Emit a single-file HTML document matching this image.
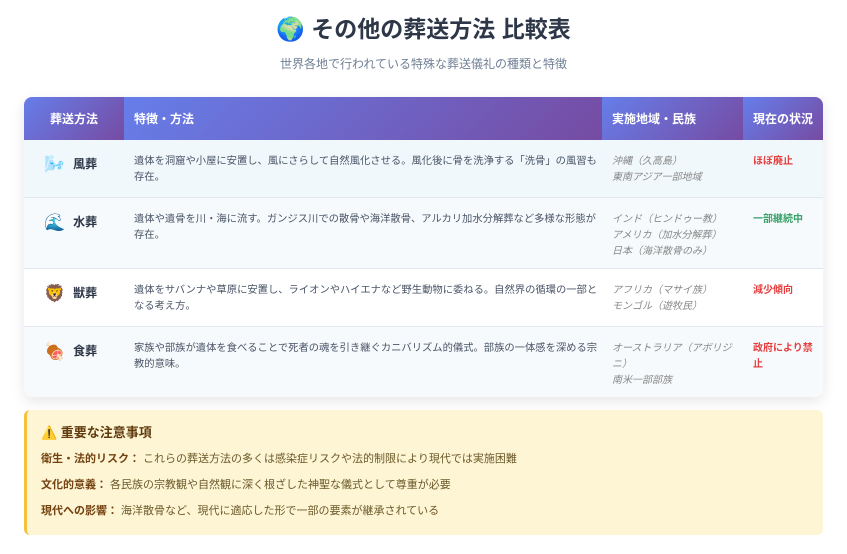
<!DOCTYPE html>
<html><head><meta charset="utf-8"><style>
*{box-sizing:border-box;margin:0;padding:0}
body{width:847px;height:554px;background:#fff;font-family:"Liberation Sans","Noto Sans CJK JP",sans-serif;color:#2d3748;overflow:hidden}
h1{position:absolute;top:10px;left:0;width:847px;text-align:center;font-size:23px;font-weight:bold;color:#2d3748}
.sub{position:absolute;top:55px;left:0;width:847px;text-align:center;font-size:12px;color:#718096}
.tbl{position:absolute;left:24px;top:97px;width:799px;border-radius:8px;overflow:hidden;box-shadow:0 4px 14px rgba(0,0,0,.1)}
table{border-collapse:collapse;width:100%;font-size:11px;table-layout:fixed}
th{height:43px;color:#fff;font-size:12px;text-align:left;padding-left:10px;background:linear-gradient(135deg,#667eea,#764ba2)}
th:first-child{text-align:center;padding:0}
td{border-bottom:1px solid #e2e8f0;vertical-align:top;padding-top:14px;line-height:16px}
td.m{font-weight:bold;font-size:12px;padding-left:20px;padding-top:16px}
td.m span{font-size:17px;margin-right:8px;vertical-align:-2px}
td.d{padding-left:10px;padding-right:0;color:#4a5568;font-size:10.3px}
td.r{padding-left:10px;padding-right:6px;color:#888;font-style:italic;font-size:10px}
td.s{padding-left:10px;padding-right:6px;font-weight:bold;font-size:10px}
.red{color:#e53e3e}.grn{color:#38a169}
.note{position:absolute;left:24px;top:410px;width:799px;height:125px;background:#fef5d4;border-left:3px solid #f6c23e;border-radius:6px;padding:12px 14px;color:#744210;font-size:11px}
.note h3{font-size:13px;margin-bottom:9px;color:#5f3b0e}
.note p{margin-bottom:10px;color:#6b5a2a}
.note b{color:#744210}
</style></head><body>
<h1>🌍 その他の葬送方法 比較表</h1>
<div class="sub">世界各地で行われている特殊な葬送儀礼の種類と特徴</div>
<div class="tbl"><table>
<colgroup><col style="width:100px"><col style="width:478px"><col style="width:141px"><col style="width:80px"></colgroup>
<tr><th>葬送方法</th><th>特徴・方法</th><th>実施地域・民族</th><th>現在の状況</th></tr>
<tr style="height:57px;background:#f0f8fb"><td class="m"><span>🌬️</span>風葬</td><td class="d">遺体を洞窟や小屋に安置し、風にさらして自然風化させる。風化後に骨を洗浄する「洗骨」の風習も存在。</td><td class="r">沖縄（久高島）<br>東南アジア一部地域</td><td class="s red">ほぼ廃止</td></tr>
<tr style="height:71px;background:#f7fafc"><td class="m"><span>🌊</span>水葬</td><td class="d">遺体や遺骨を川・海に流す。ガンジス川での散骨や海洋散骨、アルカリ加水分解葬など多様な形態が存在。</td><td class="r">インド（ヒンドゥー教）<br>アメリカ（加水分解葬）<br>日本（海洋散骨のみ）</td><td class="s grn">一部継続中</td></tr>
<tr style="height:58px;background:#fff"><td class="m"><span>🦁</span>獣葬</td><td class="d">遺体をサバンナや草原に安置し、ライオンやハイエナなど野生動物に委ねる。自然界の循環の一部となる考え方。</td><td class="r">アフリカ（マサイ族）<br>モンゴル（遊牧民）</td><td class="s red">減少傾向</td></tr>
<tr style="height:71px;background:#f7fafc"><td class="m" style="border:0"><span>🍖</span>食葬</td><td class="d" style="border:0">家族や部族が遺体を食べることで死者の魂を引き継ぐカニバリズム的儀式。部族の一体感を深める宗教的意味。</td><td class="r" style="border:0">オーストラリア（アボリジニ）<br>南米一部部族</td><td class="s red" style="border:0">政府により禁止</td></tr>
</table></div>
<div class="note">
<h3>⚠️ 重要な注意事項</h3>
<p><b>衛生・法的リスク：</b> これらの葬送方法の多くは感染症リスクや法的制限により現代では実施困難</p>
<p><b>文化的意義：</b> 各民族の宗教観や自然観に深く根ざした神聖な儀式として尊重が必要</p>
<p><b>現代への影響：</b> 海洋散骨など、現代に適応した形で一部の要素が継承されている</p>
</div>
</body></html>
